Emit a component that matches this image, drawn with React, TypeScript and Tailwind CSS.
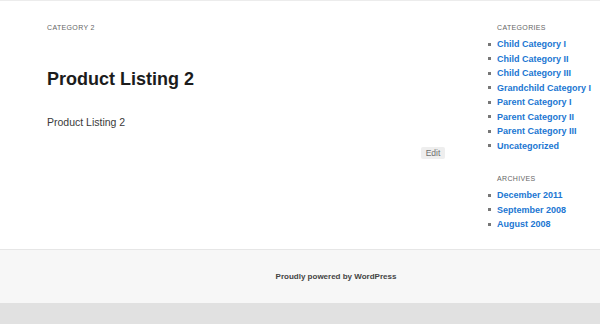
const categories = [
  "Child Category I",
  "Child Category II",
  "Child Category III",
  "Grandchild Category I",
  "Parent Category I",
  "Parent Category II",
  "Parent Category III",
  "Uncategorized",
];

const archives = ["December 2011", "September 2008", "August 2008"];

function WidgetList({ items }: { items: string[] }) {
  return (
    <ul className="flex flex-col">
      {items.map((item) => (
        <li key={item} className="flex items-center gap-[6px] h-[14.5px]">
          <span className="w-[3px] h-[3px] bg-[#777] shrink-0" />
          <a href="#" className="text-[9px] leading-[14.5px] font-bold text-[#2176d2] whitespace-nowrap">
            {item}
          </a>
        </li>
      ))}
    </ul>
  );
}

export default function App() {
  return (
    <div className="w-[600px] h-[324px] overflow-hidden bg-white font-['Liberation_Sans',Arial,sans-serif]">
      <div className="h-[249px] border-t border-[#ececec] flex pl-[47px]">
        <main className="w-[398px] pt-[22px] flex flex-col">
          <div className="text-[7px] leading-[10px] tracking-[0.35px] uppercase text-[#666]">Category 2</div>
          <h1 className="mt-[35px] text-[18px] leading-[22px] font-bold text-[#1c1c1c]">Product Listing 2</h1>
          <p className="mt-[25px] text-[10.5px] leading-[14px] text-[#3a3a3a]">Product Listing 2</p>
          <div className="mt-[18px] flex justify-end">
            <a href="#" className="w-[24px] h-[12px] rounded-[2px] bg-[#eeeeee] text-[#6f6f6f] text-[8.5px] leading-[12px] text-center">
              Edit
            </a>
          </div>
        </main>

        <aside className="ml-[43px] pt-[22px] flex flex-col">
          <div className="ml-[9px] text-[7px] leading-[10px] tracking-[0.35px] uppercase text-[#666]">Categories</div>
          <div className="mt-[4px]">
            <WidgetList items={categories} />
          </div>
          <div className="mt-[21px] ml-[9px] text-[7px] leading-[10px] tracking-[0.35px] uppercase text-[#666]">Archives</div>
          <div className="mt-[4px]">
            <WidgetList items={archives} />
          </div>
        </aside>
      </div>

      <footer className="h-[54px] border-t border-[#e6e6e6] bg-[#f7f7f7] flex items-center justify-center pl-[72px]">
        <a href="#" className="text-[8px] leading-[12px] font-bold text-[#444]">Proudly powered by WordPress</a>
      </footer>
      <div className="h-[21px] bg-[#e1e1e1]" />
    </div>
  );
}
